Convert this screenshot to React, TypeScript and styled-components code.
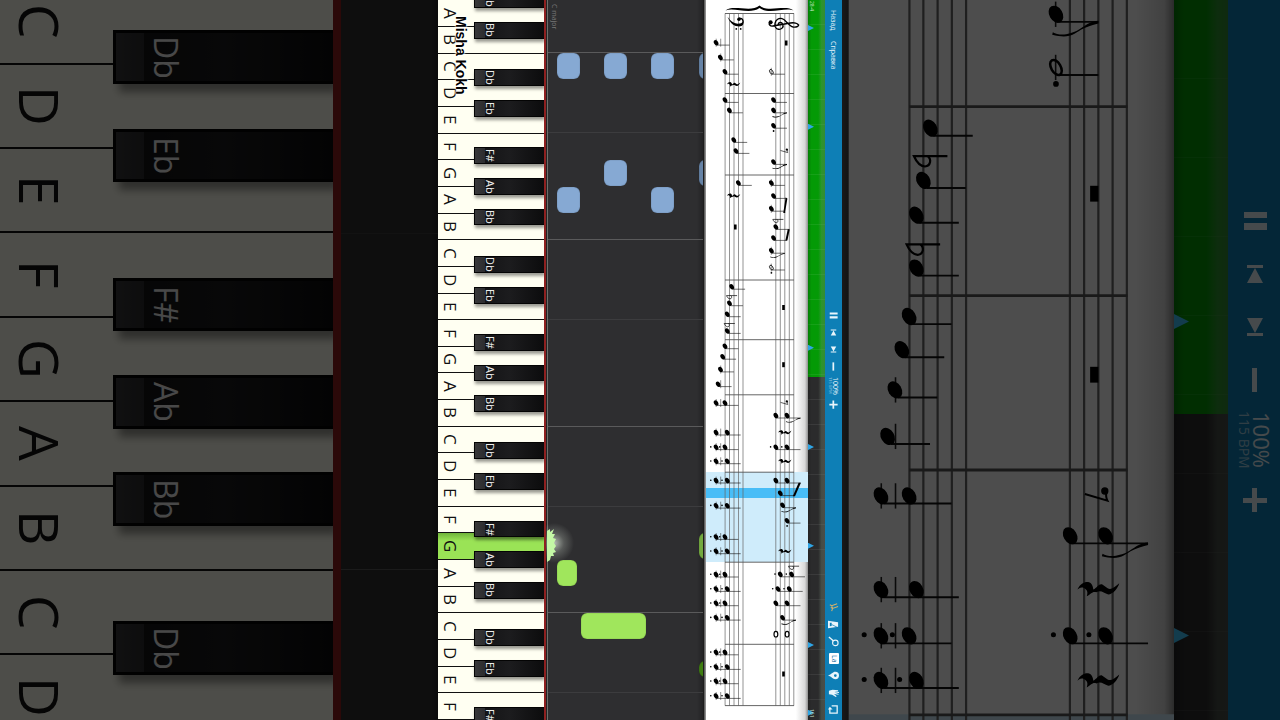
import React from "react";
import styled, { createGlobalStyle, css } from "styled-components";

const GlobalStyle = createGlobalStyle`
  *, *::before, *::after { box-sizing: border-box; }
  body { margin: 0; background: #000; font-family: "Open Sans", "Noto Sans", sans-serif; overflow: hidden; }
  button { font: inherit; color: inherit; background: none; border: 0; padding: 0; margin: 0; cursor: pointer; }
`;

/* ---------- sizes shared by the player and its enlarged backdrop ---------- */

const sizes = {
  small: {
    keyboard: 106, rim: 2, line: 1, label: 17, labelPad: 4, pitch: "calc(100% / 27)",
    sharpLeft: 36, sharpEdge: 1, sharpLabel: 11, sharpPad: 10, sharpTip: 10,
    shadow: "1px 3px 3px rgba(0, 0, 0, 0.4)",
    bar: 17, button: 17, tempo: 21, percent: 7, bpm: 4, icon: 11, marker: 6, markerTone: "#2fa5e6", tick: 25,
  },
  large: {
    keyboard: 333, rim: 8, line: 2, label: 55, labelPad: 13, pitch: "calc(100% / 8.53)",
    sharpLeft: 113, sharpEdge: 3, sharpLabel: 32, sharpPad: 34, sharpTip: 28,
    shadow: "6px 8px 8px rgba(0, 0, 0, 0.4)",
    bar: 54, button: 53, tempo: 67, percent: 22, bpm: 14, icon: 32, marker: 15, markerTone: "#40c8ff", tick: 79,
  },
};
type Size = keyof typeof sizes;
type Sized = { $size: Size };

/* ---------- page ---------- */

const Stage = styled.main`
  display: grid;
  grid-template-columns: minmax(0, 1fr) 404px minmax(0, 1fr);
  height: 100vh;
  background: #000;
`;
const Backdrop = styled.div`
  display: flex;
  overflow: hidden;
  opacity: 0.3;
`;
const Player = styled.section`
  display: flex;
  overflow: hidden;
  position: relative;
`;

/* ---------- keyboard ---------- */

const Keys = styled.div<Sized & { $align: string }>`
  flex: none;
  width: ${(p) => sizes[p.$size].keyboard}px;
  height: 100%;
  display: flex;
  flex-direction: column;
  justify-content: ${(p) => p.$align};
  overflow: hidden;
`;
const WhiteKey = styled.div<Sized & { $pressed: boolean }>`
  position: relative;
  flex: 0 0 ${(p) => sizes[p.$size].pitch};
  display: flex;
  align-items: center;
  padding-left: ${(p) => sizes[p.$size].labelPad}px;
  border-bottom: ${(p) => sizes[p.$size].line}px solid #111;
  background: ${(p) =>
    p.$pressed ? "linear-gradient(to bottom, #6fb53a, #9ae356 30%, #9ae356)" : "#fffff2"};
`;
const KeyLabel = styled.span<Sized>`
  writing-mode: vertical-rl;
  font-size: ${(p) => sizes[p.$size].label}px;
  line-height: 1;
  color: #111;
`;
const BlackKey = styled.div<Sized & { $top: number }>`
  position: absolute;
  z-index: 1;
  left: ${(p) => sizes[p.$size].sharpLeft}px;
  right: 0;
  top: ${(p) => p.$top}%;
  height: 65%;
  display: flex;
  align-items: center;
  padding-left: ${(p) => sizes[p.$size].sharpPad}px;
  border: ${(p) => sizes[p.$size].sharpEdge}px solid #040404;
  border-right: 0;
  background: ${(p) =>
    `linear-gradient(to right, #38383a, #2c2c2e ${sizes[p.$size].sharpTip}px, #141416 ${sizes[p.$size].sharpTip}px, #1c1c1e 50%, #0c0c0d)`};
  box-shadow: ${(p) => sizes[p.$size].shadow};
`;
const SharpLabel = styled.span<Sized>`
  writing-mode: vertical-rl;
  font-size: ${(p) => sizes[p.$size].sharpLabel}px;
  line-height: 1;
  color: #eee;
`;
const Rim = styled.div<Sized>`
  flex: none;
  width: ${(p) => sizes[p.$size].rim}px;
  background: #8e2020;
`;
const RollEdge = styled.div`
  flex: none;
  width: 2px;
  background: linear-gradient(to right, #222 50%, #6d6f6b 50%);
`;

const sharps: Record<string, [string, number]> = {
  C: ["Db", 61],
  D: ["Eb", 78],
  F: ["F#", 54],
  G: ["Ab", 70],
  A: ["Bb", 85],
};

/* The first or last key may lie beyond the view, with only a part of its black key in sight. */
function Keyboard({ size, notes, pressed = -1, align, hiddenFirst, hiddenLastSharp }: {
  size: Size; notes: string; pressed?: number; align: string; hiddenFirst?: boolean; hiddenLastSharp?: boolean;
}) {
  return (
    <Keys $size={size} $align={align}>
      {notes.split("").map((note, i) => (
        <WhiteKey key={i} $size={size} $pressed={i === pressed}>
          {!(hiddenFirst && i === 0) && <KeyLabel $size={size}>{note}</KeyLabel>}
          {sharps[note] && (
            <BlackKey $size={size} $top={sharps[note][1]}>
              {!(hiddenLastSharp && i === notes.length - 1) && (
                <SharpLabel $size={size}>{sharps[note][0]}</SharpLabel>
              )}
            </BlackKey>
          )}
        </WhiteKey>
      ))}
    </Keys>
  );
}

const Watermark = styled.strong`
  position: absolute;
  z-index: 2;
  left: 16px;
  top: 16px;
  writing-mode: vertical-rl;
  font: 700 14px/14px "Liberation Sans", sans-serif;
  color: #000;
  text-shadow: 0 0 2px #fff, 0 0 2px #fff, 0 0 3px #fff;
`;

/* ---------- falling notes ---------- */

const Roll = styled.div`
  position: relative;
  flex: 1;
  min-width: 0;
  overflow: hidden;
  background: linear-gradient(to left, #222224, #2e2e30 6px);
`;
const Lane = styled.i<{ $lane: number; $strong?: boolean }>`
  position: absolute;
  left: 0;
  right: 0;
  top: calc(100% / 27 * ${(p) => p.$lane} - 1px);
  height: 1px;
  background: ${(p) => (p.$strong ? "#5a5a5b" : "#3c3c3e")};
`;
const FallingNote = styled.i<{ $lane: number; $x: number; $w: number; $tone: string; $h?: number }>`
  position: absolute;
  left: ${(p) => p.$x}px;
  top: calc(100% / 27 * ${(p) => p.$lane});
  width: ${(p) => p.$w}px;
  height: ${(p) => p.$h ?? 26}px;
  border-radius: 6px;
  background: ${(p) => p.$tone};
  box-shadow: inset 0 0 1px rgba(0, 0, 0, 0.5);
`;
const KeySignature = styled.span`
  position: absolute;
  left: 2px;
  top: 4px;
  writing-mode: vertical-rl;
  font-size: 7px;
  line-height: 9px;
  color: #777;
`;
const Spark = styled.svg`
  position: absolute;
  z-index: 2;
  left: 104px;
  top: calc(100% / 27 * 20 - 16px);
`;
const Frame = styled.div<{ $w: number }>`
  flex: none;
  width: ${(p) => p.$w}px;
  background: linear-gradient(to right, #1c1c1c 35%, #777 55%, #999);
`;
const DarkFrame = styled(Frame)`
  background: linear-gradient(to right, #555, #444 80%, #999);
`;

const blue = "#86a9d3";
const lime = "#a0e65c";
const falling: { lane: number; x: number; w: number; tone: string; h?: number }[] = [
  { lane: 2, x: 9, w: 23, tone: blue },
  { lane: 2, x: 56, w: 23, tone: blue },
  { lane: 2, x: 103, w: 23, tone: blue },
  { lane: 2, x: 151, w: 23, tone: "#6683a6" },
  { lane: 6, x: 56, w: 23, tone: blue },
  { lane: 6, x: 151, w: 23, tone: "#6683a6" },
  { lane: 7, x: 9, w: 23, tone: blue },
  { lane: 7, x: 103, w: 23, tone: blue },
  { lane: 21, x: 9, w: 20, tone: lime },
  { lane: 23, x: 33, w: 65, tone: lime },
  { lane: 20, x: 151, w: 23, tone: "#74aa40" },
  { lane: 24.8, x: 151, w: 23, tone: "#3f7d12", h: 16 },
];

/* ---------- sheet music ---------- */

const Sheet = styled.div<{ $w: number }>`
  flex: none;
  width: ${(p) => p.$w}px;
  background: linear-gradient(to left, #8f8f8f, #d8d8d8 3%, #fff 12%);

  svg { display: block; width: 100%; height: 100%; }
`;

const Head = ({ x, y, open }: { x: number; y: number; open?: boolean }) => (
  <ellipse
    cx={x} cy={y} rx={open ? 2.6 : 2.9} ry={open ? 1.5 : 2.1}
    transform={`rotate(60 ${x} ${y})`}
    fill={open ? "none" : "#000"} stroke={open ? "#000" : "none"} strokeWidth={0.8}
  />
);
const Flag = ({ x, y }: { x: number; y: number }) => (
  <path
    transform={`translate(${x} ${y}) scale(0.105)`}
    d="M0-3C-40 0-45 25-85 34C-105 41-125 38-137 31L-139 39C-110 46-90 46-72 36C-55 26-40 14 0 5Z"
  />
);

type Chord = { at: number[]; y: number; len?: number; flag?: boolean; open?: boolean; dots?: boolean; dotAfter?: boolean };

function Notes({ at, y, len = 13.4, flag, open, dots, dotAfter }: Chord) {
  const end = at[at.length - 1] + len;
  const ledgers: number[] = [];
  if (at[0] < 721.5) ledgers.push(720.7);
  if (at[0] < 717) ledgers.push(716.2);
  if (at[0] > 760 && at[0] < 773) ledgers.push(771.3);
  return (
    <g>
      {ledgers.map((x) => (
        <path key={x} d={`M${x} ${y - 4}v8`} stroke="#222" strokeWidth={0.5} />
      ))}
      <path d={`M${at[0] + 1} ${y + 2.4}H${end}`} stroke="#111" strokeWidth={0.6} />
      {at.map((x) => (
        <g key={x}>
          <Head x={x} y={y} open={open} />
          {dots && <circle cx={x - 5.3} cy={y - 0.3} r={0.8} />}
        </g>
      ))}
      {dotAfter && <circle cx={at[0]} cy={y + 5.2} r={0.9} />}
      {flag && <Flag x={end} y={y + 2.4} />}
    </g>
  );
}
const Flat = ({ x, y }: { x: number; y: number }) => (
  <path
    d={`M${x + 7.5} ${y}H${x - 3.1}C${x - 2.4} ${y + 1.6} ${x - 1.2} ${y + 3.2} ${x + 0.4} ${y + 3.3}C${x + 2.2} ${y + 3.2} ${x + 2.6} ${y + 1} ${x + 1.2} ${y}`}
    fill="none" stroke="#000" strokeWidth={0.7}
  />
);
const QuarterRest = ({ x, y }: { x: number; y: number }) => (
  <path
    transform={`translate(${x} ${y}) scale(0.105)`}
    d="M-65 2C-56-18-40-23-30-20C-20-16-18-6-17 2C-6-4 0-17 9-14L26-2C36 4 46-4 61-17C57-2 42 16 28 17C14 13 6 2-8 10C-20 6-25 16-37 22C-32 10-36 2-45-3C-55-7-60-2-65 2Z"
  />
);
const EighthRest = ({ x, y }: { x: number; y: number }) => (
  <g transform={`translate(${x} ${y}) scale(0.105)`}>
    <circle cx={27} cy={-12} r={11} />
    <path d="M-33-3L35 17Q28 4 33-10" fill="none" stroke="#000" strokeWidth={6} />
  </g>
);

const bassStaff = [725.1, 729.5, 734, 738.5, 743];
const trebleStaff = [775.8, 780.3, 784.8, 789.3, 793.8];
const bars = [13.5, 93.5, 175, 280, 339.7, 394.8, 472.2, 562.2, 644.3, 705.6];

const chords: Chord[] = [
  { at: [716.1], y: 42.7 }, { at: [720.4], y: 57.5 }, { at: [725], y: 71.8 },
  { at: [725], y: 100 }, { at: [729.4], y: 110.4 }, { at: [733.8], y: 140 },
  { at: [736], y: 151 }, { at: [738.4], y: 183 },
  { at: [731.7], y: 286.8 }, { at: [729.5], y: 303.3 }, { at: [727.3], y: 314.3 },
  { at: [727.3], y: 331 }, { at: [725], y: 346.3 }, { at: [722.7], y: 356.8 },
  { at: [720.5], y: 369.5 }, { at: [718.2], y: 384.2 },
  { at: [716.1, 725], y: 403 }, { at: [716.1, 727.3], y: 432.6 },
  { at: [716.1, 725], y: 447.2, dots: true }, { at: [716.1, 727.3], y: 461.3, dots: true },
  { at: [716.1, 727.3], y: 480.6, dots: true }, { at: [716.1, 727.3], y: 505.7, dots: true },
  { at: [716.1, 725], y: 537, dots: true }, { at: [716.1, 727.3], y: 551.3, dots: true },
  { at: [716.1, 725], y: 574.6, dots: true }, { at: [716.1, 727.3], y: 589, dots: true },
  { at: [716.1, 725], y: 603.3, dots: true }, { at: [716.1, 727.3], y: 617.7, dots: true },
  { at: [716.1, 725], y: 652.4, dots: true }, { at: [716.1, 727.3], y: 667, dots: true },
  { at: [716.1, 725], y: 681.3, dots: true }, { at: [716.1, 727.3], y: 696, dots: true },
  { at: [771.4], y: 71.8, open: true },
  { at: [773.6], y: 100 }, { at: [773.6], y: 110.4, flag: true },
  { at: [773.6], y: 125.8, dotAfter: true }, { at: [773.6], y: 162, flag: true },
  { at: [771.4], y: 183 }, { at: [773.6], y: 196 }, { at: [771.4], y: 208.8 },
  { at: [775.9], y: 227 }, { at: [773.6], y: 238 },
  { at: [771.4], y: 250.8, flag: true }, { at: [771.4], y: 267.6, open: true, dotAfter: true },
  { at: [775.9, 787.1], y: 415.6, flag: true },
  { at: [775.9, 787.1], y: 447.2, dots: true },
  { at: [775.9, 787.1], y: 480.6 }, { at: [780.3], y: 493.2 },
  { at: [782.6], y: 505.3, flag: true }, { at: [787.1], y: 520.7, dotAfter: true },
  { at: [780.3, 791.6], y: 574.4, dots: true }, { at: [778, 789.3], y: 589, dots: true },
  { at: [775.9, 787.1], y: 603.3 }, { at: [782.6], y: 617.7, flag: true },
];

function Score({ viewBox }: { viewBox: string }) {
  return (
    <svg viewBox={viewBox} role="img" aria-label="Sheet music">
      <rect x={700} y={472} width={120} height={90} fill="#cfecfb" />
      <rect x={700} y={488} width={120} height={10} fill="#48bdf7" />
      <g stroke="#666" strokeWidth={0.7}>
        {[...bassStaff, ...trebleStaff].map((x) => <path key={x} d={`M${x} 13.5V705.6`} />)}
      </g>
      <g stroke="#555" strokeWidth={0.9}>
        {bars.map((y) => <path key={y} d={`M725 ${y}H794`} />)}
      </g>
      <path d="M725.5 10.5C733 4 751 13 759.5 5.5C768 13 786 4 793.5 10.5C785 7 769 15 759.5 8C750 15 734 7 725.5 10.5Z" />

      <g transform="translate(738.5 21.5) rotate(90) scale(0.44)">
        <circle cx={-5} cy={-1} r={4} />
        <path d="M-9-1C-10-10-2-13 2-12C10-11 12-4 11 2C9 14-1 21-11 25C-2 19 4 12 5 2C5-4 4-9 0-9C-4-9-6-6-7-1Z" />
        <circle cx={17} cy={-5} r={2} />
        <circle cx={17} cy={5} r={2} />
      </g>
      <g transform="translate(780.3 24.2) rotate(90) scale(0.46)">
        <path
          d="M1 5C-5 4-5-3 0-5.500C7-8 12-2 11 4C10 10 4 12.500-2 11.500C-10 10-14 3-12-4C-10-12 4-18 6-28C7-34 5-40 2-40C-2-38-4-30-2.500-22L4 16C5 22 1 25-3 24"
          fill="none" stroke="#000" strokeWidth={3}
        />
        <circle cx={-4} cy={21} r={4.4} />
      </g>

      {chords.map((c, i) => <Notes key={i} {...c} />)}

      <path d="M787.4 198.4L785.2 211.4V213H783.300L785.6 197.600Z" />
      <path d="M789.7 229.4L787.4 240.600H785.400L787.8 229Z" />
      <path d="M800.9 482.8L795 496.200H792.800L798.600 482.8Z" />

      {[[784.9, 43], [734, 227], [782.2, 307.5], [782.2, 364.7], [782.2, 674]].map(([x, y]) => (
        <rect key={`${x} ${y}`} x={x} y={y - 2.5} width={2.6} height={5} />
      ))}
      {[[733.8, 84.3], [733.8, 195.7], [785, 432.4], [785, 461.2], [785, 551.2]].map(([x, y]) => (
        <QuarterRest key={`${x} ${y}`} x={x} y={y} />
      ))}
      <EighthRest x={784} y={150.8} />
      <EighthRest x={784} y={402.7} />
      <Flat x={729.6} y={295.6} />
      <Flat x={727.3} y={323.5} />
      <Flat x={775.9} y={219.4} />
      <Flat x={791.6} y={566.2} />
      {[775.9, 787.1].map((x) => (
        <ellipse key={x} cx={x} cy={634.2} rx={1.9} ry={2.8} fill="#fff" stroke="#000" strokeWidth={1.2} />
      ))}
    </svg>
  );
}

/* ---------- song timeline ---------- */

const Track = styled.div<Sized & { $played: number }>`
  position: relative;
  flex: none;
  width: ${(p) => sizes[p.$size].bar}px;
  background:
    linear-gradient(to right, rgba(0, 0, 0, 0.2), transparent 20%, transparent 60%, rgba(120, 140, 120, 0.35) 80%, rgba(110, 120, 110, 0.45)),
    repeating-linear-gradient(to bottom, transparent 0 ${(p) => sizes[p.$size].tick - 1}px, rgba(255, 255, 255, 0.07) 0 ${(p) => sizes[p.$size].tick}px),
    linear-gradient(to bottom, #049a06 ${(p) => p.$played}%, #2b2b2c ${(p) => p.$played}%);
`;
const Marker = styled.i<Sized & { $at: number }>`
  position: absolute;
  left: 0;
  top: ${(p) => p.$at}%;
  width: ${(p) => sizes[p.$size].marker}px;
  height: ${(p) => sizes[p.$size].marker}px;
  margin-top: ${(p) => Math.round(sizes[p.$size].marker / -2)}px;
  background: ${(p) => sizes[p.$size].markerTone};
  clip-path: polygon(0 0, 100% 50%, 0 100%);
`;
const Measure = styled.span<{ $end?: boolean }>`
  position: absolute;
  left: 1px;
  ${(p) => (p.$end ? css`bottom: 2px;` : css`top: 1px;`)}
  writing-mode: vertical-rl;
  font-size: 5px;
  line-height: 6px;
  color: #cfe8cf;
`;

function Timeline({ size, played, markers, children }: {
  size: Size; played: number; markers: number[]; children?: React.ReactNode;
}) {
  return (
    <Track $size={size} $played={played}>
      {markers.map((at) => <Marker key={at} $size={size} $at={at} />)}
      {children}
    </Track>
  );
}

/* ---------- toolbar ---------- */

const Bar = styled.div<Sized>`
  flex: none;
  width: ${(p) => sizes[p.$size].bar}px;
  height: 100%;
  display: grid;
  grid-template-rows: minmax(0, 1fr) auto minmax(0, 1fr);
  background: #0e7fb6;
  color: #e9f5fb;
`;
const Menu = styled.nav`
  display: flex;
  flex-direction: column;
  align-items: center;
  gap: 11px;
  padding-top: 10px;
`;
const MenuButton = styled.button`
  writing-mode: vertical-rl;
  font-size: 7px;
  line-height: 9px;
`;
const Transport = styled.div`
  grid-row: 2;
  display: flex;
  flex-direction: column;
  align-items: stretch;
`;
const Tools = styled.div`
  grid-row: 3;
  display: flex;
  flex-direction: column;
  justify-content: flex-end;
  padding-bottom: 2px;
`;
const IconButton = styled.button<Sized>`
  height: ${(p) => sizes[p.$size].button}px;
  display: grid;
  place-items: center;

  svg { width: ${(p) => sizes[p.$size].icon}px; height: ${(p) => sizes[p.$size].icon}px; display: block; fill: currentColor; }
`;
const Tempo = styled.div<Sized>`
  height: ${(p) => sizes[p.$size].tempo}px;
  display: flex;
  flex-direction: row-reverse;
  align-items: center;
  justify-content: center;
`;
const Percent = styled.span<Sized>`
  writing-mode: vertical-rl;
  font-size: ${(p) => sizes[p.$size].percent}px;
  line-height: 1;
`;
const Bpm = styled.span<Sized>`
  writing-mode: vertical-rl;
  font-size: ${(p) => sizes[p.$size].bpm}px;
  line-height: 1;
  color: #9fcbe2;
`;
const LabelTile = styled.span`
  display: grid;
  place-items: center;
  width: 10px;
  height: 11px;
  border-radius: 1px;
  background: #fff;
  color: #0e6c9c;
  writing-mode: vertical-rl;
  font-size: 7px;
  line-height: 8px;
`;

function TransportControls({ size }: { size: Size }) {
  return (
    <Transport>
      <IconButton $size={size} aria-label="Pause">
        <svg viewBox="0 0 32 32"><path d="M5 7h23v6H5zM5 18h23v7H5z" /></svg>
      </IconButton>
      <IconButton $size={size} aria-label="Previous">
        <svg viewBox="0 0 32 32"><path d="M8 7h16v3H8zM16 10l8 15H8z" /></svg>
      </IconButton>
      <IconButton $size={size} aria-label="Next">
        <svg viewBox="0 0 32 32"><path d="M8 22h16v3H8zM16 22L8 7h16z" /></svg>
      </IconButton>
      <IconButton $size={size} aria-label="Slower">
        <svg viewBox="0 0 32 32"><path d="M13 4h5v24h-5z" /></svg>
      </IconButton>
      <Tempo $size={size}>
        <Percent $size={size}>100%</Percent>
        <Bpm $size={size}>115 BPM</Bpm>
      </Tempo>
      <IconButton $size={size} aria-label="Faster">
        <svg viewBox="0 0 32 32"><path d="M13 4h5v10h10v5H18v9h-5v-9H4v-5h9z" /></svg>
      </IconButton>
    </Transport>
  );
}

export default function App() {
  return (
    <>
      <GlobalStyle />
      <Stage>
        <Backdrop>
          <Keyboard size="large" notes="CDEFGABCD" align="center" hiddenLastSharp />
          <Rim $size="large" />
          <Roll>
            <Lane $lane={8.78} />
            <Lane $lane={21.38} $strong />
          </Roll>
        </Backdrop>

        <Player>
          <Keyboard size="small" notes="GABCDEFGABCDEFGABCDEFGABCDEF" pressed={21} align="flex-end" hiddenFirst />
          <Watermark>Misha Kokh</Watermark>
          <Rim $size="small" />
          <RollEdge />
          <Roll>
            <KeySignature>C major</KeySignature>
            {[2, 9, 16, 23].map((lane) => <Lane key={lane} $lane={lane} $strong />)}
            {[5, 12, 19, 26].map((lane) => <Lane key={lane} $lane={lane} />)}
            {falling.map((n, i) => (
              <FallingNote key={i} $lane={n.lane} $x={n.x} $w={n.w} $tone={n.tone} $h={n.h} />
            ))}
          </Roll>
          <Spark width="40" height="56" viewBox="0 0 40 56" aria-hidden="true">
            <defs>
              <radialGradient id="glow" gradientUnits="userSpaceOnUse" cx="12" cy="26" r="20">
                <stop offset="0" stopColor="#f4fff0" stopOpacity="0.7" />
                <stop offset="0.5" stopColor="#cfd8cc" stopOpacity="0.25" />
                <stop offset="1" stopColor="#cfd8cc" stopOpacity="0" />
              </radialGradient>
            </defs>
            <path d="M4 0H36V56H4Z" fill="url(#glow)" />
            <path d="M5 14L8 12L8 15L12 12L10 17L13 17L11 21L14 22L12 26L14 29L12 32L14 35L11 36L12 39L9 39L8 43L5 45Z" fill="#c4f8a6" />
          </Spark>
          <Frame $w={3} />
          <Sheet $w={102}><Score viewBox="706 0 102 720" /></Sheet>
          <Timeline size="small" played={52.4} markers={[3.9, 17.6, 48.3, 62.1, 75.8, 89.6, 99]}>
            <Measure>28-4</Measure>
            <Measure $end>161</Measure>
          </Timeline>
          <Bar $size="small">
            <Menu>
              <MenuButton>Назад</MenuButton>
              <MenuButton>Справка</MenuButton>
            </Menu>
            <TransportControls size="small" />
            <Tools>
              <IconButton $size="small" aria-label="Instrument">
                <svg viewBox="0 0 12 12">
                  <path d="M2 3L4 4L10 2M4 4L5 7L11 5M3 6L5 7L4 10" fill="none" stroke="#d9b26a" strokeWidth="1.1" />
                </svg>
              </IconButton>
              <IconButton $size="small" aria-label="Metronome">
                <svg viewBox="0 0 12 12">
                  <path fillRule="evenodd" d="M0 2L11 3.500V8.500L0 10ZM2 4V8L4 7.700V4.200Z" />
                  <path d="M4 6L10 9" stroke="#0e7fb6" strokeWidth="0.8" />
                </svg>
              </IconButton>
              <IconButton $size="small" aria-label="Zoom">
                <svg viewBox="0 0 12 12">
                  <circle cx="8" cy="7.500" r="3" fill="none" stroke="currentColor" strokeWidth="1.200" />
                  <path d="M6 5.500L1 1" stroke="currentColor" strokeWidth="1.500" />
                </svg>
              </IconButton>
              <IconButton $size="small" aria-label="Note names"><LabelTile>La</LabelTile></IconButton>
              <IconButton $size="small" aria-label="Marker">
                <svg viewBox="0 0 12 12">
                  <path fillRule="evenodd" d="M0 6C4 5 5 2 8 2A4 4 0 0 1 8 10C5 10 4 7 0 6ZM8 4.500A1.500 1.500 0 0 0 8 7.500A1.500 1.500 0 0 0 8 4.500Z" />
                </svg>
              </IconButton>
              <IconButton $size="small" aria-label="Hands">
                <svg viewBox="0 0 12 12">
                  <path d="M1 4L5 3L11 3.500V4.500H7L12 5.500V6.500L7 6L11.500 7.500V8.500L6.500 7.500L9.500 10L8.500 11L4.500 8.500L1 8Z" />
                </svg>
              </IconButton>
              <IconButton $size="small" aria-label="Loop">
                <svg viewBox="0 0 12 12">
                  <path d="M4 2H10V10H2V5" fill="none" stroke="currentColor" strokeWidth="1.400" />
                  <path d="M0 6L2 3L5 6Z" />
                </svg>
              </IconButton>
            </Tools>
          </Bar>
        </Player>

        <Backdrop>
          <DarkFrame $w={7} />
          <Sheet $w={325}><Score viewBox="706 246.3 102.7 227.5" /></Sheet>
          <Timeline size="large" played={57.5} markers={[44.6, 88.2]} />
          <Bar $size="large"><TransportControls size="large" /></Bar>
        </Backdrop>
      </Stage>
    </>
  );
}
